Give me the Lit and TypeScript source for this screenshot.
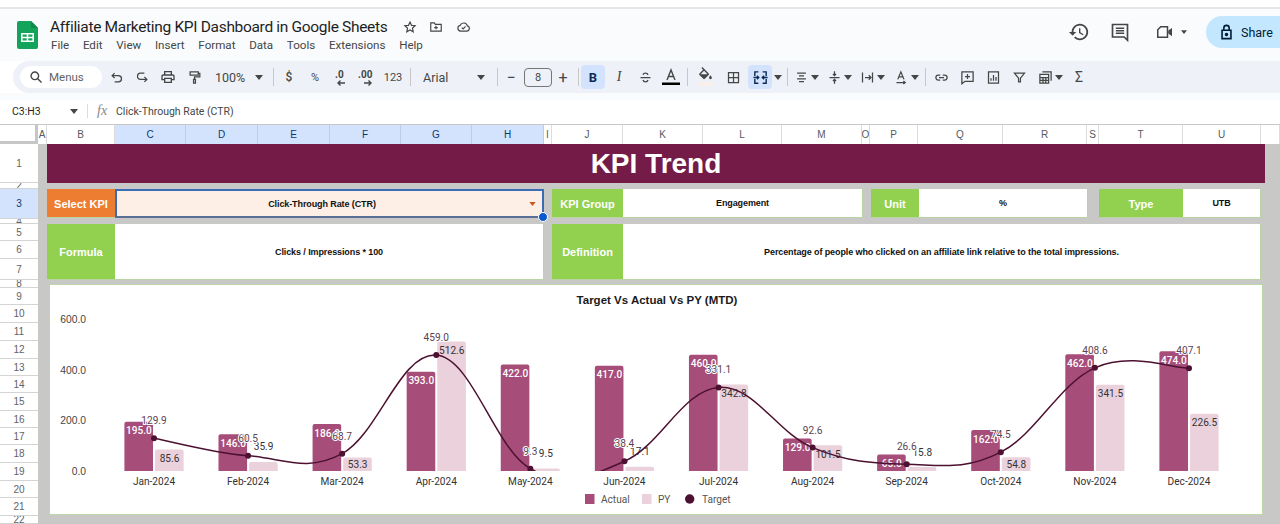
import { LitElement, html, svg, css } from 'lit'
import { customElement } from 'lit/decorators.js'

const MONTHS = ['Jan', 'Feb', 'Mar', 'Apr', 'May', 'Jun', 'Jul', 'Aug', 'Sep', 'Oct', 'Nov', 'Dec']
const ACTUAL = [195, 146, 186, 393, 422, 417, 460, 129, 65, 162, 462, 474]
const PY = [85.6, 35.9, 53.3, 512.6, 9.5, 17.1, 342.8, 101.5, 15.8, 54.8, 341.5, 226.5]
const TARGET = [129.9, 60.5, 68.7, 459, 9.3, 38.4, 331.1, 92.6, 26.6, 74.5, 408.6, 407.1]

const BASE = 471
const SCALE = 0.2525
const tickX = (i: number) => 154 + 94.09 * i
const valY = (v: number) => BASE - v * SCALE

const COLS = [
  ['A', 9], ['B', 68], ['C', 71], ['D', 72], ['E', 72], ['F', 71], ['G', 71], ['H', 72], ['I', 8],
  ['J', 71], ['K', 80], ['L', 79], ['M', 80], ['O', 8], ['P', 48], ['Q', 85], ['R', 84], ['S', 12],
  ['T', 84], ['U', 78], ['', 19],
] as [string, number][]
const SELECTED_COLS = 'CDEFGH'

const ROWS = [
  ['1', 39], ['2', 6], ['3', 30], ['4', 5], ['5', 17], ['6', 18], ['7', 21], ['8', 8], ['9', 17],
  ['10', 18], ['11', 18], ['12', 18], ['13', 17], ['14', 17], ['15', 18], ['16', 17], ['17', 17],
  ['18', 18], ['19', 18], ['20', 17], ['21', 18], ['22', 8],
] as [string, number][]

// smooth line through the target points, same look as the sheets "function" curve
function targetPath() {
  const pts = TARGET.map((v, i) => [tickX(i), valY(v)])
  const k = 0.19
  let d = `M${pts[0][0]} ${pts[0][1]}`
  for (let i = 0; i < pts.length - 1; i++) {
    const p0 = pts[Math.max(i - 1, 0)]
    const p1 = pts[i]
    const p2 = pts[i + 1]
    const p3 = pts[Math.min(i + 2, pts.length - 1)]
    const c1x = p1[0] + (p2[0] - p0[0]) * k
    const c1y = p1[1] + (p2[1] - p0[1]) * k
    const c2x = p2[0] - (p3[0] - p1[0]) * k
    const c2y = p2[1] - (p3[1] - p1[1]) * k
    d += ` C${c1x} ${c1y} ${c2x} ${c2y} ${p2[0]} ${p2[1]}`
  }
  return d
}

function barLabelY(v: number) {
  const h = v * SCALE
  if (h < 12) return valY(v) - 15
  return valY(v) + Math.min(9, h / 2)
}

const arrow = html`<svg class="caret" width="8" height="5" viewBox="0 0 8 5"><path d="M0 0h8L4 5z" /></svg>`

@customElement('sheet-chart')
class SheetChart extends LitElement {
  static styles = css`
    :host {
      display: block;
    }
    svg {
      display: block;
    }
    text {
      font-family: Roboto, 'Liberation Sans', sans-serif;
      font-size: 10.1px;
      dominant-baseline: central;
    }
    .title {
      font-family: 'Liberation Sans', sans-serif;
      font-size: 11.5px;
      font-weight: 700;
      fill: #1a1a1a;
      text-anchor: middle;
    }
    .axis {
      fill: #444;
      text-anchor: end;
      font-family: 'Liberation Sans', sans-serif;
      font-size: 10.3px;
    }
    .month {
      fill: #333;
      text-anchor: middle;
    }
    .actual-label {
      fill: #fff;
      font-weight: 500;
      text-anchor: middle;
    }
    .py-label {
      fill: #333;
      text-anchor: middle;
    }
    .target-label {
      fill: #5b4350;
      text-anchor: middle;
      stroke: #fff;
      stroke-width: 2px;
      paint-order: stroke;
    }
    .legend {
      fill: #555;
    }
    .line {
      fill: none;
      stroke: #4c1130;
      stroke-width: 1.5;
    }
  `

  render() {
    return html`
      <svg width="1212" height="229" viewBox="50 285 1212 229">
        <defs>
          <clipPath id="plot"><rect x="50" y="285" width="1212" height="186"></rect></clipPath>
        </defs>
        <text class="title" x="657" y="300">Target Vs Actual Vs PY (MTD)</text>
        ${[0, 200, 400, 600].map((v) => svg`<text class="axis" x="86" y=${valY(v)}>${v.toFixed(1)}</text>`)}
        ${MONTHS.map((m, i) => svg`
          <path fill="#a64d79" d=${this.bar(tickX(i) - 29.6, 28.6, ACTUAL[i])}></path>
          <path fill="#ead1dc" d=${this.bar(tickX(i) + 1, 28.6, PY[i])}></path>
          <text class="month" x=${tickX(i)} y="481">${m}-2024</text>
        `)}
        ${ACTUAL.map((v, i) => svg`<text class="actual-label" x=${tickX(i) - 15} y=${valY(v) + 9}>${v.toFixed(1)}</text>`)}
        ${PY.map((v, i) => svg`<text class="py-label" x=${tickX(i) + 15.5} y=${barLabelY(v)}>${v.toFixed(1)}</text>`)}
        <g clip-path="url(#plot)">
          <path class="line" d=${targetPath()}></path>
          ${TARGET.map((v, i) => svg`<circle cx=${tickX(i)} cy=${valY(v)} r="3" fill="#4c1130"></circle>`)}
        </g>
        ${TARGET.map((v, i) => svg`<text class="target-label" x=${tickX(i)} y=${valY(v) - 17.5}>${v.toFixed(1)}</text>`)}

        <rect x="585" y="494" width="9.5" height="10" fill="#a64d79"></rect>
        <text class="legend" x="601" y="499">Actual</text>
        <rect x="642" y="494" width="9.5" height="10" fill="#ead1dc"></rect>
        <text class="legend" x="658" y="499">PY</text>
        <circle cx="689.7" cy="499" r="4.7" fill="#4c1130"></circle>
        <text class="legend" x="702" y="499">Target</text>
      </svg>
    `
  }

  private bar(x: number, w: number, v: number) {
    const top = valY(v)
    const r = Math.min(2, v * SCALE)
    return `M${x} ${BASE}V${top + r}Q${x} ${top} ${x + r} ${top}H${x + w - r}Q${x + w} ${top} ${x + w} ${top + r}V${BASE}Z`
  }
}

@customElement('app-root')
export class AppRoot extends LitElement {
  static styles = css`
    :host {
      display: block;
      width: 1280px;
      height: 524px;
      overflow: hidden;
      background: #fff;
      font-family: 'Liberation Sans', Arial, sans-serif;
      color: #1f1f1f;
    }
    svg {
      display: block;
      flex: none;
    }
    .topstrip {
      height: 7px;
      background: #fff;
      border-bottom: 2px solid #e6e6e6;
    }
    .header {
      height: 52px;
      background: #f9fbfd;
      display: flex;
      position: relative;
    }
    .logo {
      margin: 12px 0 0 17px;
    }
    .titles {
      margin-left: 12px;
      padding-top: 8px;
    }
    .title-row {
      display: flex;
      align-items: center;
      height: 20px;
    }
    .doc-title {
      font-family: Roboto, sans-serif;
      font-size: 15.5px;
      letter-spacing: -0.32px;
      color: #1f1f1f;
      white-space: nowrap;
    }
    .title-icons {
      display: flex;
      align-items: center;
      gap: 11px;
      margin-left: 16px;
    }
    .menus {
      display: flex;
      gap: 13.7px;
      font-family: Roboto, sans-serif;
      font-size: 11.6px;
      color: #444746;
      margin-top: 1px;
      padding-left: 1px;
    }
    .actions {
      margin-left: auto;
      display: flex;
      align-items: center;
      height: 32px;
      margin-top: 7px;
    }
    .act-comment {
      margin-left: 20px;
    }
    .act-video {
      margin-left: 25px;
    }
    .act-caret {
      margin-left: 7px;
    }
    .share {
      display: flex;
      align-items: center;
      gap: 8px;
      width: 74px;
      height: 32px;
      margin-left: 19px;
      padding-left: 14px;
      box-sizing: border-box;
      background: #c2e7ff;
      border-radius: 16px 0 0 16px;
      color: #001d35;
      font-family: Roboto, sans-serif;
      font-size: 12.5px;
    }
    .toolbar {
      height: 32px;
      margin-left: 13px;
      background: #eef2f8;
      border-radius: 16px 0 0 16px;
      display: flex;
      align-items: center;
      padding-left: 7px;
      color: #444746;
    }
    .under {
      height: 7px;
      background: #f9fbfd;
    }
    .pill {
      width: 82px;
      height: 22px;
      background: #fff;
      border-radius: 11px;
      display: flex;
      align-items: center;
      gap: 6px;
      padding-left: 9px;
      box-sizing: border-box;
      font-family: Roboto, sans-serif;
      font-size: 11.5px;
      color: #5f6368;
      margin-right: 1px;
    }
    .b {
      width: 26px;
      height: 24px;
      flex: none;
      display: flex;
      align-items: center;
      justify-content: center;
      font-family: Roboto, sans-serif;
      font-size: 11px;
      color: #444746;
    }
    .b.on {
      width: 24px;
      margin: 0 1px;
      background: #d3e3fd;
      border-radius: 4px;
    }
    .b.on.merge {
      margin-left: 2px;
    }
    .ml1 {
      margin-left: 1px;
    }
    .ml2 {
      margin-left: 2px;
    }
    .zoom {
      width: 46px;
      font-size: 12.5px;
    }
    .dollar {
      font-size: 12px;
      font-weight: 500;
    }
    .bold {
      color: #0b2a55;
      font-size: 13px;
      font-weight: 700;
    }
    .italic {
      font-size: 14px;
      font-style: italic;
      font-family: 'Liberation Serif', serif;
    }
    .a {
      width: 12px;
      height: 24px;
      flex: none;
      display: flex;
      align-items: center;
      justify-content: center;
    }
    .a.merge {
      width: 7px;
      margin-left: 1px;
    }
    .a.t5 {
      width: 2px;
      margin-right: 5px;
    }
    .a.t6 {
      width: 2px;
      margin-right: 6px;
    }
    .a.t3 {
      width: 2px;
      margin-right: 3px;
    }
    .caret {
      fill: #444746;
    }
    .sep {
      width: 1px;
      height: 18px;
      background: #c7c7c7;
      flex: none;
    }
    .sep-zoom {
      margin: 0 2px 0 8px;
    }
    .sep-num {
      margin: 0 3px 0 4px;
    }
    .sep-font {
      margin: 0 0 0 8px;
    }
    .sep-size {
      margin: 0 1px 0 4px;
    }
    .sep-fmt {
      margin: 0 3px;
    }
    .sep-merge {
      margin: 0 0 0 6px;
    }
    .sep-align {
      margin: 0 2px 0 6px;
    }
    .font {
      width: 75px;
      flex: none;
      display: flex;
      align-items: center;
      justify-content: space-between;
      padding: 0 4px 0 9px;
      box-sizing: border-box;
      font-family: Roboto, sans-serif;
      font-size: 12.5px;
    }
    .size {
      width: 28px;
      height: 19px;
      flex: none;
      border: 1px solid #747775;
      border-radius: 4px;
      box-sizing: border-box;
      display: flex;
      align-items: center;
      justify-content: center;
      font-family: Roboto, sans-serif;
      font-size: 11px;
    }
    .pm {
      width: 26px;
      text-align: center;
      flex: none;
      font-size: 16px;
      font-family: Roboto, sans-serif;
    }
    .pm.plus {
      width: 22px;
    }
    .sigma {
      font-size: 14px;
    }
    .formula-bar {
      height: 24px;
      padding-bottom: 2px;
      box-sizing: border-box;
      background: #fff;
      display: flex;
      align-items: center;
      font-family: Roboto, sans-serif;
      font-size: 10.5px;
      color: #444746;
    }
    .name-box {
      width: 70px;
      padding-left: 12px;
      box-sizing: border-box;
      color: #1f1f1f;
    }
    .fx-sep {
      width: 1px;
      height: 14px;
      background: #dadce0;
      margin: 0 9px 0 9px;
    }
    .fx {
      font-family: 'Liberation Serif', serif;
      font-style: italic;
      font-size: 14px;
      color: #888;
      width: 19px;
    }
    .col-heads {
      display: flex;
      height: 20px;
      box-sizing: border-box;
      border-top: 1px solid #c7c7c7;
      background: #fff;
      font-size: 10px;
      color: #575a5e;
    }
    .corner {
      width: 38px;
      flex: none;
      box-sizing: border-box;
      background: #fff;
      border-right: 3px solid #c4c7c5;
      border-bottom: 3px solid #c4c7c5;
    }
    .col-head {
      flex: none;
      box-sizing: border-box;
      border-right: 1px solid #dadce0;
      display: flex;
      align-items: center;
      justify-content: center;
      overflow: hidden;
    }
    .col-head.sel {
      background: #d3e3fd;
      color: #0b3a70;
      border-right-color: #bccde8;
    }
    .sheet {
      display: flex;
      height: 380px;
      overflow: hidden;
    }
    .row-heads {
      width: 38px;
      flex: none;
      background: #fff;
      font-size: 10px;
      color: #5f6368;
    }
    .row-head {
      box-sizing: border-box;
      border-bottom: 1px solid #d4d4d4;
      display: flex;
      align-items: center;
      justify-content: center;
      overflow: hidden;
    }
    .row-head.sel {
      background: #d3e3fd;
      color: #0b3a70;
    }
    .canvas {
      flex: 1;
      background: #c8c9c6;
      padding-left: 9px;
      display: grid;
      grid-template-columns: 68px 429px 8px 71px 240px 8px 48px 169px 11px 84px 78px 4px;
      grid-template-rows: 39px 6px 29px 6px 56px 4px 231px;
    }
    .band {
      grid-column: 1 / -1;
      grid-row: 1;
      background: #741b47;
      color: #fff;
      font-size: 28px;
      font-weight: 700;
      display: flex;
      align-items: center;
      justify-content: center;
    }
    .cell {
      display: flex;
      align-items: center;
      justify-content: center;
      font-size: 9px;
      letter-spacing: -0.1px;
      font-weight: 700;
      color: #111;
      background: #fff;
      box-sizing: border-box;
      border-right: 1px solid #b9d3a4;
      border-bottom: 1px solid #b9d3a4;
    }
    .label {
      background: #92d050;
      color: #fff;
      font-size: 11px;
      letter-spacing: 0;
      padding-top: 1px;
      border: none;
      border-bottom: 1px solid #b9d3a4;
    }
    .orange {
      background: #ed7d31;
    }
    .r3 {
      grid-row: 3;
    }
    .r5 {
      grid-row: 5;
    }
    .c1 {
      grid-column: 1;
    }
    .c2 {
      grid-column: 2;
    }
    .c4 {
      grid-column: 4;
    }
    .c5 {
      grid-column: 5;
    }
    .c7 {
      grid-column: 7;
    }
    .c8 {
      grid-column: 8;
    }
    .c10 {
      grid-column: 10;
    }
    .c11 {
      grid-column: 11;
    }
    .wide {
      grid-column: 5 / 12;
    }
    .picked {
      position: relative;
      background: #fdeee6;
      padding-right: 15px;
      border: 2px solid #3a6db5;
      border-bottom-color: #5a6f96;
    }
    .drop {
      position: absolute;
      right: 6px;
      top: 11px;
      fill: #c8591f;
    }
    .handle {
      position: absolute;
      right: -6px;
      bottom: -6px;
      width: 8px;
      height: 8px;
      border-radius: 50%;
      background: #0b57d0;
      border: 0.5px solid #fff;
    }
    .chart {
      grid-column: 1 / -1;
      grid-row: 7;
      margin: 0 2px;
      background: #fff;
      border: 1px solid #bfd7a8;
    }
  `

  render() {
    return html`
      <div class="topstrip"></div>
      ${this.renderHeader()} ${this.renderToolbar()}
      <div class="under"></div>
      <div class="formula-bar">
        <div class="name-box">C3:H3</div>
        ${arrow}
        <div class="fx-sep"></div>
        <div class="fx">fx</div>
        <div>Click-Through Rate (CTR)</div>
      </div>
      <div class="col-heads">
        <div class="corner"></div>
        ${COLS.map(
          ([c, w]) =>
            html`<div class="col-head ${c && SELECTED_COLS.includes(c) ? 'sel' : ''}" style="width:${w}px">${c}</div>`,
        )}
      </div>
      <div class="sheet">
        <div class="row-heads">
          ${ROWS.map(
            ([r, h]) => html`<div class="row-head ${r === '3' ? 'sel' : ''}" style="height:${h}px">${r}</div>`,
          )}
        </div>
        <div class="canvas">
          <div class="band">KPI Trend</div>

          <div class="cell label orange r3 c1">Select KPI</div>
          <div class="cell picked r3 c2">
            Click-Through Rate (CTR)
            <svg class="drop" width="7" height="4" viewBox="0 0 8 5"><path d="M0 0h8L4 5z" /></svg>
            <div class="handle"></div>
          </div>
          <div class="cell label r3 c4">KPI Group</div>
          <div class="cell r3 c5">Engagement</div>
          <div class="cell label r3 c7">Unit</div>
          <div class="cell r3 c8">%</div>
          <div class="cell label r3 c10">Type</div>
          <div class="cell r3 c11">UTB</div>

          <div class="cell label r5 c1">Formula</div>
          <div class="cell r5 c2">Clicks / Impressions * 100</div>
          <div class="cell label r5 c4">Definition</div>
          <div class="cell r5 wide">Percentage of people who clicked on an affiliate link relative to the total impressions.</div>

          <sheet-chart class="chart"></sheet-chart>
        </div>
      </div>
    `
  }

  private renderHeader() {
    return html`
      <div class="header">
        <svg class="logo" width="21" height="28" viewBox="0 0 21 28">
          <path fill="#14a35a" d="M2 0h12l7 7v19a2 2 0 0 1-2 2H2a2 2 0 0 1-2-2V2a2 2 0 0 1 2-2z" />
          <path fill="#0e8a4a" d="M14 0l7 7h-7z" />
          <path fill="#fff" d="M4 12h13v9H4zm1.6 1.6v2.2h4.1v-2.2zm5.7 0v2.2h4.1v-2.2zm-5.7 3.6v2.2h4.1v-2.2zm5.700 0v2.2h4.1v-2.2z" fill-rule="evenodd" />
        </svg>
        <div class="titles">
          <div class="title-row">
            <div class="doc-title">Affiliate Marketing KPI Dashboard in Google Sheets</div>
            <div class="title-icons">
              <svg width="14" height="14" viewBox="0 0 24 24" fill="none" stroke="#444746" stroke-width="2"><path d="M12 3.500l2.600 5.700 6.200.7-4.600 4.200 1.300 6.100L12 17.100l-5.500 3.100 1.300-6.100-4.600-4.200 6.200-.7z" /></svg>
              <svg width="16" height="14" viewBox="0 0 24 24" fill="none" stroke="#444746" stroke-width="2"><path d="M3 5h6l2 2.500h10V19H3zM12 10v6M9 13h6" /></svg>
              <svg width="17" height="14" viewBox="0 0 24 24" fill="none" stroke="#444746" stroke-width="2"><path d="M7 19a5 5 0 0 1-.6-9.900A6.500 6.500 0 0 1 18.700 10 4.600 4.600 0 0 1 18 19zM9 13l2.400 2.400L15.500 11" /></svg>
            </div>
          </div>
          <div class="menus">
            <span>File</span><span>Edit</span><span>View</span><span>Insert</span><span>Format</span><span>Data</span><span>Tools</span><span>Extensions</span><span>Help</span>
          </div>
        </div>
        <div class="actions">
          <svg width="22" height="22" viewBox="0 0 24 24" fill="#444746"><path d="M13 3c-4.970 0-9 4.030-9 9H1l3.890 3.890.07.14L9 12H6c0-3.870 3.130-7 7-7s7 3.130 7 7-3.130 7-7 7c-1.930 0-3.680-.79-4.940-2.060l-1.420 1.420C8.270 19.990 10.510 21 13 21c4.970 0 9-4.030 9-9s-4.030-9-9-9zm-1 5v5l4.280 2.540.72-1.210-3.500-2.080V8H12z" /></svg>
          <svg class="act-comment" width="20" height="22" viewBox="0 0 24 24" fill="none" stroke="#444746" stroke-width="2"><path d="M3 3h18v19l-4-4H3zM7 7.500h10M7 10.500h10M7 13.500h10" /></svg>
          <svg class="act-video" width="19" height="18" viewBox="0 0 24 24"><path fill="none" stroke="#444746" stroke-width="2" d="M7 5h9v14H3V9z" /><path fill="#444746" d="M17 10l5-3.500v11L17 14z" /></svg>
          <svg class="caret act-caret" width="6" height="4" viewBox="0 0 8 5"><path d="M0 0h8L4 5z" /></svg>
          <div class="share">
            <svg width="13" height="16" viewBox="0 0 14 18" fill="none" stroke="#001d35" stroke-width="1.8"><path d="M2 7h10v9.500H2zM4 7V4.500a3 3 0 0 1 6 0V7" /><circle cx="7" cy="11.800" r="1.100" fill="#001d35" /></svg>
            <span>Share</span>
          </div>
        </div>
      </div>
    `
  }

  private renderToolbar() {
    const s = (d: string) => html`<svg width="15" height="15" viewBox="0 0 24 24" fill="none" stroke="#444746" stroke-width="2"><path d=${d} /></svg>`
    const f = (d: string) => html`<svg width="16" height="16" viewBox="0 0 24 24" fill="#444746"><path d=${d} /></svg>`
    return html`
      <div class="toolbar">
        <div class="pill">
          <svg width="14" height="14" viewBox="0 0 24 24" fill="none" stroke="#444746" stroke-width="2.400"><circle cx="10" cy="10" r="6.500" /><path d="M15 15l6.500 6.500" /></svg>
          Menus
        </div>
        <div class="b">${s('M9 5L5 9l4 4M5 9h10a5 5 0 0 1 0 10H9')}</div>
        <div class="b">${s('M15 11l4 4-4 4M19 15H9a5 5 0 0 1 0-10h6')}</div>
        <div class="b">${f('M19 8h-1V3H6v5H5c-1.660 0-3 1.340-3 3v6h4v4h12v-4h4v-6c0-1.660-1.340-3-3-3zM8 5h8v3H8V5zm8 12v2H8v-4h8v2zm2-2v-2H6v2H4v-4c0-.55.45-1 1-1h14c.55 0 1 .45 1 1v4h-2z')}</div>
        <div class="b">${s('M5 3h13v5H5zM18 5.500h2.500V11H12v4M10.500 15h3v6h-3z')}</div>
        <div class="b zoom">100%</div>
        <div class="a">${arrow}</div>
        <div class="sep sep-zoom"></div>
        <div class="b dollar">$</div>
        <div class="b">%</div>
        <div class="b">
          <svg width="20" height="20" viewBox="0 0 20 20"><text x="4" y="11" font-size="10" font-weight="700" fill="#444746">.0</text><path d="M14 16H7m2.500-2.500L7 16l2.500 2.500" fill="none" stroke="#444746" stroke-width="1.400" /></svg>
        </div>
        <div class="b">
          <svg width="22" height="20" viewBox="0 0 22 20"><text x="2" y="11" font-size="10" font-weight="700" fill="#444746">.00</text><path d="M8 16h7m-2.500-2.500L15 16l-2.500 2.500" fill="none" stroke="#444746" stroke-width="1.400" /></svg>
        </div>
        <div class="b">123</div>
        <div class="sep sep-num"></div>
        <div class="font"><span>Arial</span>${arrow}</div>
        <div class="sep sep-font"></div>
        <div class="pm">−</div>
        <div class="size">8</div>
        <div class="pm plus">+</div>
        <div class="sep sep-size"></div>
        <div class="b on"><span class="bold">B</span></div>
        <div class="b"><span class="italic">I</span></div>
        <div class="b">${s('M4 12h16M16 8c-.5-2-2-3-4-3s-3.500 1-4 2.500M8 16c.5 2 2 3 4 3s3.500-1 4-3')}</div>
        <div class="b">
          <svg width="20" height="20" viewBox="0 0 20 20"><path d="M6 13L10 3l4 10M7.500 9.500h5" fill="none" stroke="#444746" stroke-width="1.400" /><rect x="1" y="15.500" width="18" height="2.500" fill="#000" /></svg>
        </div>
        <div class="sep sep-fmt"></div>
        <div class="b ml1">
          <svg width="17" height="20" viewBox="0 0 24 28"><path fill="#444746" d="M16.560 8.940L7.620 0 6.210 1.410l2.380 2.380-5.150 5.150c-.59.59-.59 1.540 0 2.120l5.500 5.500c.29.29.68.44 1.060.44s.77-.15 1.060-.44l5.500-5.500c.59-.58.59-1.530 0-2.120zM5.210 10L10 5.210 14.790 10H5.210zM19 11.500s-2 2.170-2 3.500c0 1.100.9 2 2 2s2-.9 2-2c0-1.330-2-3.500-2-3.500z" /><rect y="22" width="24" height="4" fill="#fdeee6" /></svg>
        </div>
        <div class="b ml2">${s('M4 4h16v16H4zM12 4v16M4 12h16')}</div>
        <div class="b on merge">
          <svg width="17" height="17" viewBox="0 0 24 24" fill="none" stroke="#0b2a55" stroke-width="2"><path d="M4 10V4h5M15 4h5v6M4 14v6h5M15 20h5v-6M2 12h7m-2-2.500L9.500 12 7 14.500M22 12h-7m2-2.500L14.500 12l2.500 2.500" /></svg>
        </div>
        <div class="a merge">${arrow}</div>
        <div class="sep sep-merge"></div>
        <div class="b">${s('M5 5h14M8 9.500h8M5 14h14M8 18.500h8')}</div>
        <div class="a t5">${arrow}</div>
        <div class="b">${s('M4 12h16M12 2v7m-2.500-2.500L12 9l2.500-2.500M12 22v-7m-2.500 2.500L12 15l2.500 2.500')}</div>
        <div class="a t5">${arrow}</div>
        <div class="b">${s('M4 4v16M20 4v16M8 12h9m-3-3.500 3.500 3.500-3.500 3.500')}</div>
        <div class="a t6">${arrow}</div>
        <div class="b">${s('M6 15L11 3l5 12M7.500 11h7M4 20h14m-3-2.500 3 2.500-3 2.500')}</div>
        <div class="a t3">${arrow}</div>
        <div class="sep sep-align"></div>
        <div class="b">${s('M10 8H7a4 4 0 0 0 0 8h3M14 8h3a4 4 0 0 1 0 8h-3M8 12h8')}</div>
        <div class="b">${s('M3 3h18v15H8l-5 4zM12 6.500v8M8 10.500h8')}</div>
        <div class="b">${s('M4 3h16v18H4zM8 17v-4M12 17V8M16 17v-6')}</div>
        <div class="b">${s('M4 5h16l-6.500 8v6h-3v-6z')}</div>
        <div class="b">${s('M7 3h14v14M3 7h14v14H3zM3 12h14M3 16.500h14M8 12v9M12.500 12v9')}</div>
        <div class="a t6">${arrow}</div>
        <div class="b sigma">Σ</div>
      </div>
    `
  }
}
